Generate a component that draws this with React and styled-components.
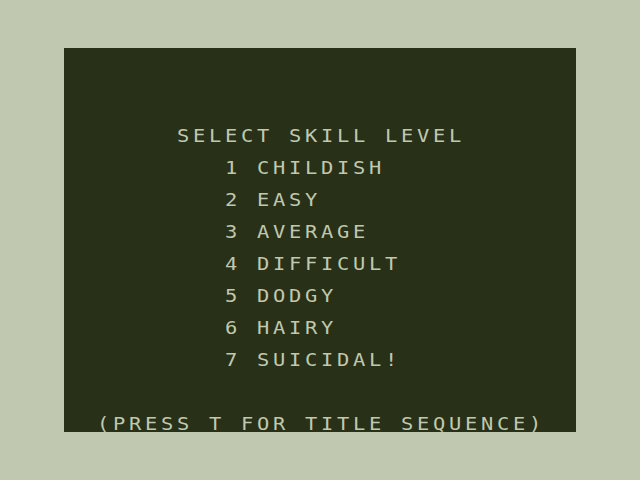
import styled, { createGlobalStyle } from "styled-components";

const INK = "#c0c8b0";
const PAPER = "#283018";
const CELL = 16;
const WIDEN = 1.2;

const Global = createGlobalStyle`
    html, body {
        margin: 0;
        height: 100%;
        background: ${INK};
    }
    #root {
        height: 100%;
    }
`;

const Border = styled.div`
    display: flex;
    align-items: center;
    justify-content: center;
    width: 640px;
    height: 480px;
    background: ${INK};
`;

const Screen = styled.div`
    display: flex;
    flex-direction: column;
    width: ${CELL * 32}px;
    height: ${CELL * 24}px;
    padding-top: ${CELL * 5}px;
    box-sizing: border-box;
    background: ${PAPER};
    color: ${INK};
    font-family: "DejaVu Sans Mono", "Liberation Mono", monospace;
    font-size: 17px;
    line-height: ${CELL}px;
    white-space: pre;
`;

// one row of text starting at a given character column
const Line = styled.div`
    height: ${CELL}px;
    padding-left: ${p => p.$col * CELL + 1}px;
`;

// glyphs stretched wide, spaced so each one fills a 16px cell
const Chars = styled.span`
    display: inline-block;
    transform: scaleX(${WIDEN});
    transform-origin: left center;
    letter-spacing: ${CELL / WIDEN - 17 * 0.602}px;
`;

const Menu = styled.ol`
    display: flex;
    flex-direction: column;
    gap: ${CELL}px;
    margin: ${CELL}px 0 0;
    padding: 0;
    list-style: none;
`;

const Footer = styled(Line)`
    margin-top: auto;
`;

const levels = ["CHILDISH", "EASY", "AVERAGE", "DIFFICULT", "DODGY", "HAIRY", "SUICIDAL!"];

export default function App() {
    return (
        <Border>
            <Global />
            <Screen>
                <Line $col={7}><Chars>SELECT SKILL LEVEL</Chars></Line>
                <Menu>
                    {levels.map((name, i) => (
                        <Line as="li" key={name} $col={10}>
                            <Chars>{`${i + 1} ${name}`}</Chars>
                        </Line>
                    ))}
                </Menu>
                <Footer $col={2}><Chars>(PRESS T FOR TITLE SEQUENCE)</Chars></Footer>
            </Screen>
        </Border>
    );
}
